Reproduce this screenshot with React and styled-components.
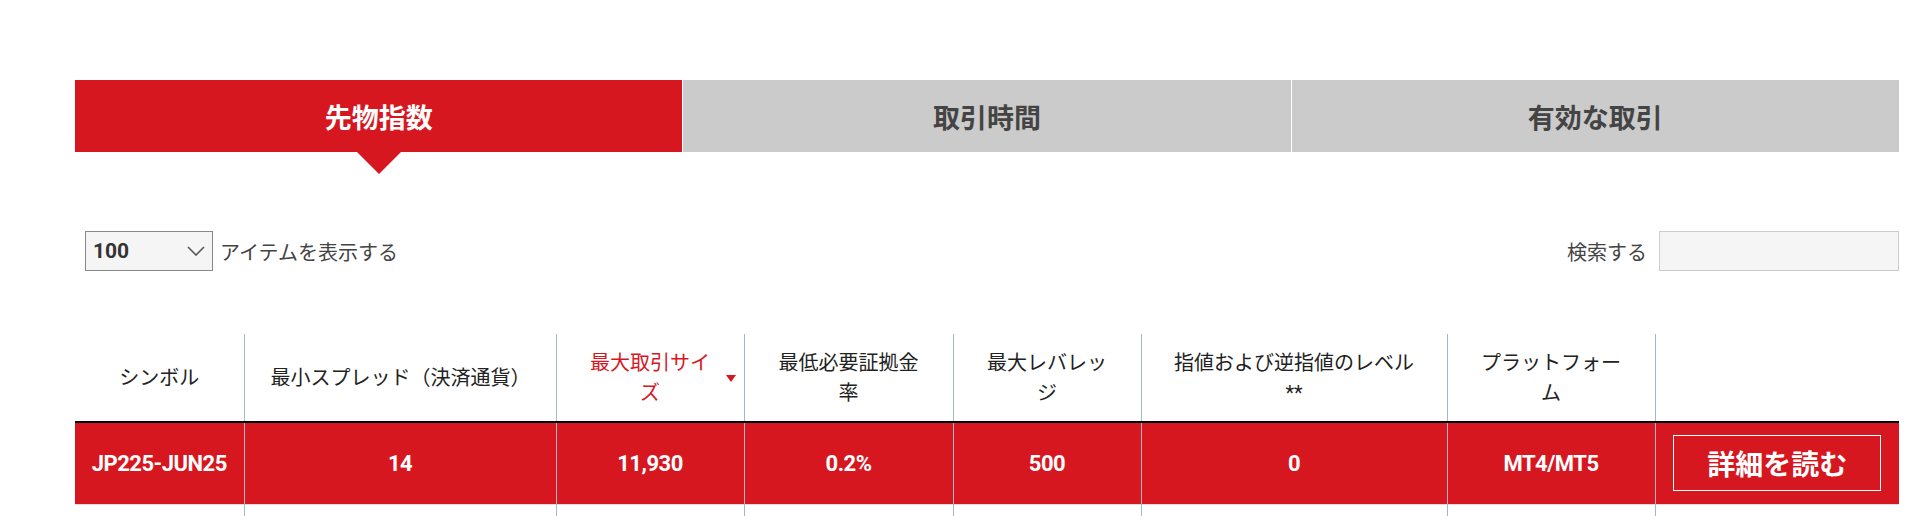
import styled, { createGlobalStyle, css } from "styled-components";

const RED = "#d6171f";

const GlobalStyle = createGlobalStyle`
  body {
    margin: 0;
    background: #fff;
    font-family: Roboto, "Noto Sans CJK JP", sans-serif;
    color: #222;
  }
`;

const tabs = ["先物指数", "取引時間", "有効な取引"];

const columns = [
  { label: "シンボル", width: 169 },
  { label: "最小スプレッド（決済通貨）", width: 312 },
  { label: "最大取引サイズ", width: 188, sorted: true },
  { label: "最低必要証拠金率", width: 209 },
  { label: "最大レバレッジ", width: 188 },
  { label: "指値および逆指値のレベル **", width: 306 },
  { label: "プラットフォーム", width: 208 },
  { label: "", width: 244 },
];

const rows = [["JP225-JUN25", "14", "11,930", "0.2%", "500", "0", "MT4/MT5"]];

const App = () => {
  return (
    <>
      <GlobalStyle />
      <Page>
        <TabBar>
          {tabs.map((t, i) => (
            <Tab key={t} $active={i === 0}>
              {t}
            </Tab>
          ))}
        </TabBar>

        <Controls>
          <LengthControl>
            <SelectBox>
              <span>100</span>
              <svg width="18" height="10" viewBox="0 0 18 10">
                <path d="M1 1l8 8 8-8" fill="none" stroke="#555" strokeWidth="1.6" />
              </svg>
            </SelectBox>
            <ControlLabel>アイテムを表示する</ControlLabel>
          </LengthControl>
          <SearchControl>
            <ControlLabel>検索する</ControlLabel>
            <SearchInput type="text" />
          </SearchControl>
        </Controls>

        <Table>
          <colgroup>
            {columns.map((c, i) => (
              <col key={i} style={{ width: c.width }} />
            ))}
          </colgroup>
          <thead>
            <tr>
              {columns.map((c, i) => (
                <HeadCell key={i} $sorted={c.sorted}>
                  {c.label}
                  {c.sorted && <SortArrow />}
                </HeadCell>
              ))}
            </tr>
          </thead>
          <tbody>
            {rows.map((r) => (
              <BodyRow key={r[0]} $highlight>
                {r.map((v, i) => (
                  <BodyCell key={i}>{v}</BodyCell>
                ))}
                <BodyCell>
                  <DetailButton>詳細を読む</DetailButton>
                </BodyCell>
              </BodyRow>
            ))}
            <BodyRow>
              {columns.map((c, i) => (
                <BodyCell key={i} />
              ))}
            </BodyRow>
          </tbody>
        </Table>
      </Page>
    </>
  );
};

export default App;

const Page = styled.div`
  width: 1824px;
  padding: 80px 0 0 75px;
`;

const TabBar = styled.div`
  display: grid;
  grid-template-columns: repeat(3, 1fr);
  gap: 1px;
`;

const Tab = styled.div`
  position: relative;
  height: 72px;
  display: flex;
  align-items: center;
  justify-content: center;
  font-size: 27px;
  font-weight: 700;
  background: #cbcbcb;
  color: #444;
  cursor: pointer;

  ${(p) =>
    p.$active &&
    css`
      background: ${RED};
      color: #fff;

      &::after {
        content: "";
        position: absolute;
        left: 50%;
        top: 100%;
        margin-left: -22px;
        border-left: 22px solid transparent;
        border-right: 22px solid transparent;
        border-top: 22px solid ${RED};
      }
    `}
`;

const Controls = styled.div`
  display: flex;
  justify-content: space-between;
  align-items: center;
  margin-top: 79px;
  padding-left: 10px;
  height: 40px;
`;

const LengthControl = styled.div`
  display: flex;
  align-items: center;
  gap: 7px;
`;

const SelectBox = styled.div`
  box-sizing: border-box;
  width: 128px;
  height: 40px;
  display: flex;
  align-items: center;
  justify-content: space-between;
  padding: 0 7px 0 7px;
  border: 1px solid #888;
  background: #f5f5f5;
  font-size: 21px;
  font-weight: 700;
  color: #333;
`;

const ControlLabel = styled.span`
  font-size: 20px;
  color: #444;
`;

const SearchControl = styled.div`
  display: flex;
  align-items: center;
  gap: 12px;
`;

const SearchInput = styled.input`
  box-sizing: border-box;
  width: 240px;
  height: 40px;
  border: 1px solid #ccc;
  background: #f5f5f5;
  outline: none;
  font: inherit;
`;

const Table = styled.table`
  margin-top: 63px;
  width: 1824px;
  border-collapse: collapse;
  table-layout: fixed;
`;

const HeadCell = styled.th`
  position: relative;
  height: 87px;
  padding: 0 26px;
  font-size: 20px;
  font-weight: 400;
  line-height: 30px;
  text-align: center;
  vertical-align: middle;
  color: ${(p) => (p.$sorted ? RED : "#222")};
  border-bottom: 2px solid #000;

  & + & {
    border-left: 1px solid #a9b7c4;
  }
`;

const SortArrow = styled.span`
  position: absolute;
  right: 8px;
  top: 50%;
  margin-top: -3px;
  border-left: 5px solid transparent;
  border-right: 5px solid transparent;
  border-top: 7px solid ${RED};
`;

const BodyRow = styled.tr`
  height: 82px;
  background: ${(p) => (p.$highlight ? RED : "#fff")};
  color: ${(p) => (p.$highlight ? "#fff" : "#222")};
  border-bottom: 1px solid #ddd;
`;

const BodyCell = styled.td`
  padding: 0 10px;
  text-align: center;
  vertical-align: middle;
  font-size: 22px;
  font-weight: 700;
  letter-spacing: -0.5px;

  & + & {
    border-left: 1px solid #a9b7c4;
  }
`;

const DetailButton = styled.button`
  box-sizing: border-box;
  width: 208px;
  height: 56px;
  border: 1px solid #fff;
  background: transparent;
  color: #fff;
  font-family: "Noto Sans CJK JP", sans-serif;
  font-size: 28px;
  font-weight: 700;
  letter-spacing: 0;
  cursor: pointer;
`;
